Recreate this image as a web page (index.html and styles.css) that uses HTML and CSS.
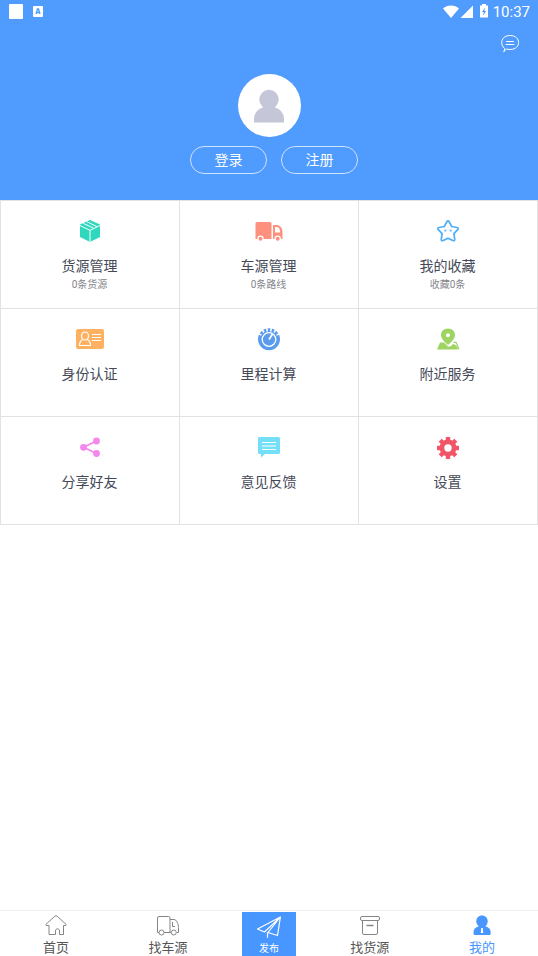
FILE: index.html
```html
<!DOCTYPE html>
<html lang="zh-CN">
<head>
<meta charset="utf-8">
<meta name="viewport" content="width=device-width, initial-scale=1">
<title>我的</title>
<link rel="stylesheet" href="styles.css">
</head>
<body>
<header class="profile">
  <div class="status">
    <svg class="status-left" viewBox="0 0 36 16" aria-hidden="true">
      <rect x="1" y="0" width="14" height="15" rx="1" fill="#fff"/>
      <rect x="25" y="2" width="10" height="11" rx="1" fill="#fff"/>
      <path d="M28 10 29.500 5h1L32 10M28.500 8.500h3" fill="none" stroke="#509bfe" stroke-width="1.300"/>
    </svg>
    <div class="status-right">
      <svg class="status-icons" viewBox="0 0 46 16" aria-hidden="true">
        <path d="M0 4.500C4 .5 12 .5 16 4.500L8 14Z" fill="#fff"/>
        <path d="M30 1.500V14H17.500Z" fill="#fff"/>
        <path d="M37 1.500H39V0h4v1.500h2V13.500h-8Z" fill="#fff"/>
        <path d="M42 3.500 39 8h1.700L40 11.500 43.200 7h-1.800Z" fill="#509bfe"/>
      </svg>
      <span class="clock">10:37</span>
    </div>
  </div>
  <div class="toolbar">
    <button class="message" type="button" aria-label="消息">
      <svg viewBox="0 0 20 20" fill="none" stroke="#fff" stroke-linecap="round" stroke-linejoin="round">
        <path d="M4.500 14.500C-1 10 1.500 1.500 10 1.500c11.500 0 11.500 14 0 14-1.400 0-2.600-.2-3.500-.5L4 17.500Z"/>
        <path d="M6.500 7.500h7M6 10.500h8"/>
      </svg>
    </button>
  </div>
  <div class="avatar">
    <svg viewBox="0 0 30 34" fill="#c5c6d8" aria-hidden="true">
      <circle cx="15" cy="10.500" r="9.700"/>
      <path d="M0 33.500V30c0-6 4.500-10.500 10-12h10c5.500 1.500 10 6 10 12v3.500Z"/>
    </svg>
  </div>
  <div class="account">
    <button class="pill" type="button">登录</button>
    <button class="pill" type="button">注册</button>
  </div>
</header>

<main class="content">
  <div class="tiles">
    <a class="tile" href="#goods">
      <svg class="tile-icon" viewBox="0 0 28 24" aria-hidden="true">
        <path d="M14 1 24 5.500V18L14 23 4 18V5.500Z" fill="#2fd8bd"/>
        <path d="M4 6.500 14 11.300 24 6.500M14 11.300V23M7.300 4.300l10.200 4.900M10.800 2.700l10.200 4.900" fill="none" stroke="#fff"/>
      </svg>
      <span class="tile-label">货源管理</span>
      <span class="tile-note">0条货源</span>
    </a>
    <a class="tile" href="#trucks">
      <svg class="tile-icon" viewBox="0 0 28 24" aria-hidden="true">
        <path d="M2 3H15a1.500 1.500 0 0 1 1.500 1.500V20H.5V4.500A1.500 1.500 0 0 1 2 3ZM18 6h3.500c3.500 0 6 3 6 7v7H18Z" fill="#fe917e"/>
        <path d="M20 8v5.500h5.200c0-3.500-1.500-5.500-3.500-5.500Z" fill="#fff"/>
        <g fill="#fe917e" stroke="#fff" stroke-width="1.300"><circle cx="5.500" cy="19.700" r="2.600"/><circle cx="22.700" cy="19.700" r="2.600"/></g>
      </svg>
      <span class="tile-label">车源管理</span>
      <span class="tile-note">0条路线</span>
    </a>
    <a class="tile" href="#favorites">
      <svg class="tile-icon" viewBox="0 0 28 24" aria-hidden="true">
        <path d="M12.800 2.800q1.200-2 2.400 0l2.500 4.700 5.200 1q2.300.5.8 2.200l-3.800 4 .8 5.400q.2 2.300-1.900 1.400L14 19.200l-4.800 2.300q-2.100.9-1.900-1.400l.8-5.400-3.800-4q-1.500-1.700.8-2.200l5.200-1Z" fill="none" stroke="#4baefb" stroke-width="1.700" stroke-linejoin="round"/>
        <g fill="#8dcafb"><circle cx="11.300" cy="11.500" r="1.300"/><circle cx="16.700" cy="11.500" r="1.300"/></g>
      </svg>
      <span class="tile-label">我的收藏</span>
      <span class="tile-note">收藏0条</span>
    </a>
    <a class="tile" href="#identity">
      <svg class="tile-icon" viewBox="0 0 28 24" aria-hidden="true">
        <rect y="2" width="28" height="20" rx="2" fill="#feb161"/>
        <g fill="none" stroke="#fff" stroke-width="1.200"><ellipse cx="9" cy="9" rx="3.500" ry="4"/><path d="M6.700 12.500C4.500 13.500 3.500 15 3.500 18.500h11c0-3.500-1-5-3.200-6M16 7.500h9M16 10.500h9M16 13.500h9"/></g>
      </svg>
      <span class="tile-label">身份认证</span>
    </a>
    <a class="tile" href="#mileage">
      <svg class="tile-icon" viewBox="0 0 28 24" aria-hidden="true">
        <circle cx="14" cy="12.300" r="11" fill="#5a9bed"/>
        <g stroke="#fff" stroke-width="1.500"><path d="M6.500 8.200 2 6M9 5.500 6.500 1.500M12.300 4.500 11.500 0M15.700 4.500 16.500 0M19 5.500l2.500-4M21.500 8.200 26 6"/></g>
        <circle cx="14" cy="12.500" r="6.800" fill="none" stroke="#fff" stroke-width="1.300"/>
        <path d="M14 12.500 17.500 7" stroke="#fff" stroke-width="1.700"/>
      </svg>
      <span class="tile-label">里程计算</span>
    </a>
    <a class="tile" href="#nearby">
      <svg class="tile-icon" viewBox="0 0 28 24" aria-hidden="true">
        <path d="M6 15.500h4l4 4h2.500l2.500-2.500c3 .5 4.500 2.500 5 5.500H3Z" fill="#9dd462"/>
        <path d="M19.500 15.300h2.500l3 7" fill="none" stroke="#9dd462" stroke-width="1.200"/>
        <path fill-rule="evenodd" d="M14 1.500c4 0 7 2.800 7 6.500 0 3.500-3 6.500-7 10-4-3.500-7-6.500-7-10 0-3.700 3-6.500 7-6.500Zm0 4.800a2 2 0 1 0 0 4 2 2 0 0 0 0-4Z" fill="#9dd462"/>
      </svg>
      <span class="tile-label">附近服务</span>
    </a>
    <a class="tile" href="#share">
      <svg class="tile-icon" viewBox="0 0 28 24" aria-hidden="true">
        <path d="M20.500 6 7.500 12.300l13 6.200" fill="none" stroke="#f487eb" stroke-width="1.800"/>
        <g fill="#f487eb"><circle cx="20.500" cy="6" r="3.400"/><circle cx="7.500" cy="12.300" r="3.400"/><circle cx="20.500" cy="18.500" r="3.400"/></g>
      </svg>
      <span class="tile-label">分享好友</span>
    </a>
    <a class="tile" href="#feedback">
      <svg class="tile-icon" viewBox="0 0 28 24" aria-hidden="true">
        <path d="M4.500 2h19A1.500 1.500 0 0 1 25 3.500v14a1.500 1.500 0 0 1-1.500 1.500H10l-4 3.500V19H4.500A1.500 1.500 0 0 1 3 17.500v-14A1.500 1.500 0 0 1 4.500 2Z" fill="#74dff9"/>
        <path d="M7 7.500h14M7 11h14M7 14.500h14" stroke="#fff" stroke-width="1.200"/>
      </svg>
      <span class="tile-label">意见反馈</span>
    </a>
    <a class="tile" href="#settings">
      <svg class="tile-icon" viewBox="0 0 28 24" aria-hidden="true">
        <g stroke="#f25568" stroke-width="4.400"><path d="M14 2v22M3 13h22M6.200 5.200l15.600 15.600M21.800 5.200 6.200 20.800"/></g>
        <circle cx="14" cy="13" r="8.400" fill="#f25568"/>
        <circle cx="14" cy="13" r="3.700" fill="#fff"/>
      </svg>
      <span class="tile-label">设置</span>
    </a>
  </div>
</main>

<nav class="tabs" aria-label="主导航">
  <a class="tab" href="#home">
    <svg class="tab-icon" viewBox="0 0 24 24" fill="none" stroke="#858585" stroke-linejoin="round" aria-hidden="true">
      <path d="M5 11.500H2.200Q1.500 11 2 10.300L10.800 2.200q1.200-1 2.400 0L22 10.300q.5.700-.2 1.200H19.500V20.500h-4V17c0-3-4-3-4 0v3.500H5Z"/>
    </svg>
    <span>首页</span>
  </a>
  <a class="tab" href="#find-trucks">
    <svg class="tab-icon" viewBox="0 0 24 24" fill="none" stroke="#858585" aria-hidden="true">
      <path d="M3 18.500H1.500V4q0-1.500 1.500-1.500h9.500q1.500 0 1.500 1.500V18.500H8M14 5.500h4c2.500 0 4.500 4.500 4.500 8v5h-1.500M14 18.500h1M16.500 8v4.500H19"/>
      <circle cx="5.500" cy="18.500" r="2.500"/><circle cx="17.800" cy="18.500" r="2.500"/>
    </svg>
    <span>找车源</span>
  </a>
  <a class="tab publish" href="#publish">
    <svg class="tab-icon" viewBox="0 0 24 24" fill="none" stroke="#fff" stroke-width="1.200" stroke-linejoin="round" aria-hidden="true">
      <path d="M23.400 2 .5 14l7 3L23.400 2 20.500 20.500l-9.500-3L23.400 2M10.500 22.800V17.500"/>
    </svg>
    <span>发布</span>
  </a>
  <a class="tab" href="#find-goods">
    <svg class="tab-icon" viewBox="0 0 24 24" fill="none" stroke="#858585" aria-hidden="true">
      <rect x="2.500" y="2.500" width="19" height="4" rx="1.500"/>
      <path d="M4.500 6.500V19q0 1.500 1.500 1.500h12q1.500 0 1.500-1.500V6.500"/>
      <path d="M8.500 11.500h7" stroke-width="1.500"/>
    </svg>
    <span>找货源</span>
  </a>
  <a class="tab active" href="#mine" aria-current="page">
    <svg class="tab-icon" viewBox="0 0 24 24" fill="#4896ff" aria-hidden="true">
      <path d="M12 1.500c3.500 0 5.700 2.500 5.700 5.700 0 2.200-1 4-2.300 5 3.500 1 5.300 3.300 5.300 6v1.300q0 1.500-1.500 1.500H5q-1.500 0-1.500-1.500V18.200c0-2.700 1.800-5 5.300-6-1.400-1-2.500-2.800-2.500-5C6.300 4 8.500 1.500 12 1.500Z"/>
      <path d="M11.200 14h1.600l.4 5h-2.400Z" fill="#fff"/>
    </svg>
    <span>我的</span>
  </a>
</nav>
</body>
</html>
```
FILE: styles.css
```css
* {
  box-sizing: border-box;
}

body {
  margin: 0;
  min-height: 100vh;
  display: flex;
  flex-direction: column;
  background: #fff;
  color: #444957;
  font-family: Roboto, "Noto Sans CJK SC", sans-serif;
}

a {
  color: inherit;
  text-decoration: none;
}

button {
  margin: 0;
  padding: 0;
  border: 0;
  background: none;
  color: inherit;
  font: inherit;
  cursor: pointer;
}

svg {
  display: block;
}

.profile {
  display: flex;
  flex-direction: column;
  padding-bottom: 26px;
  background: #509bfe;
  color: #fff;
}

.status {
  display: flex;
  align-items: center;
  justify-content: space-between;
  height: 24px;
  padding: 0 8px;
}

.status-left {
  width: 36px;
  height: 16px;
}

.status-right {
  display: flex;
  align-items: center;
  gap: 4px;
}

.status-icons {
  width: 46px;
  height: 16px;
}

.clock {
  font-size: 15px;
  line-height: 24px;
}

.toolbar {
  display: flex;
  justify-content: flex-end;
  padding: 10px 18px 0;
}

.message svg {
  width: 20px;
  height: 20px;
}

.avatar {
  align-self: center;
  display: flex;
  align-items: center;
  justify-content: center;
  width: 63px;
  height: 63px;
  margin-top: 20px;
  border-radius: 50%;
  background: #fff;
}

.avatar svg {
  width: 30px;
  height: 34px;
}

.account {
  display: flex;
  justify-content: center;
  gap: 14px;
  margin-top: 9px;
  padding-left: 10px;
}

.pill {
  width: 77px;
  height: 28px;
  padding-bottom: 2px;
  border: 1px solid #cfe2ff;
  border-radius: 14px;
  font-size: 14px;
}

.content {
  flex: 1;
}

.tiles {
  display: grid;
  grid-template-columns: repeat(3, 1fr);
  grid-auto-rows: 107px;
  gap: 1px;
  border: 1px solid #e2e2e2;
  background: #e2e2e2;
}

.tile {
  display: flex;
  flex-direction: column;
  align-items: center;
  padding: 18px 1px 0 0;
  background: #fff;
}

.tile-icon {
  width: 28px;
  height: 24px;
}

.tile-label {
  margin-top: 13px;
  font-size: 14px;
  line-height: 20px;
}

.tile-note {
  margin-top: 1px;
  color: #85868d;
  font-size: 10px;
  line-height: 16px;
}

.tabs {
  display: grid;
  grid-template-columns: 5fr 5fr 4fr 5fr 5fr;
  height: 46px;
  border-top: 1px solid #f0f0f0;
  background: #fff;
}

.tab {
  display: flex;
  flex-direction: column;
  align-items: center;
  padding-top: 3px;
  color: #555;
  font-size: 13px;
  line-height: 20px;
}

.tab-icon {
  width: 24px;
  height: 24px;
}

.tab.active {
  color: #4896ff;
}

.publish {
  justify-self: center;
  width: 54px;
  margin-top: 1px;
  background: #4896ff;
  color: #fff;
  font-size: 10px;
}
```
